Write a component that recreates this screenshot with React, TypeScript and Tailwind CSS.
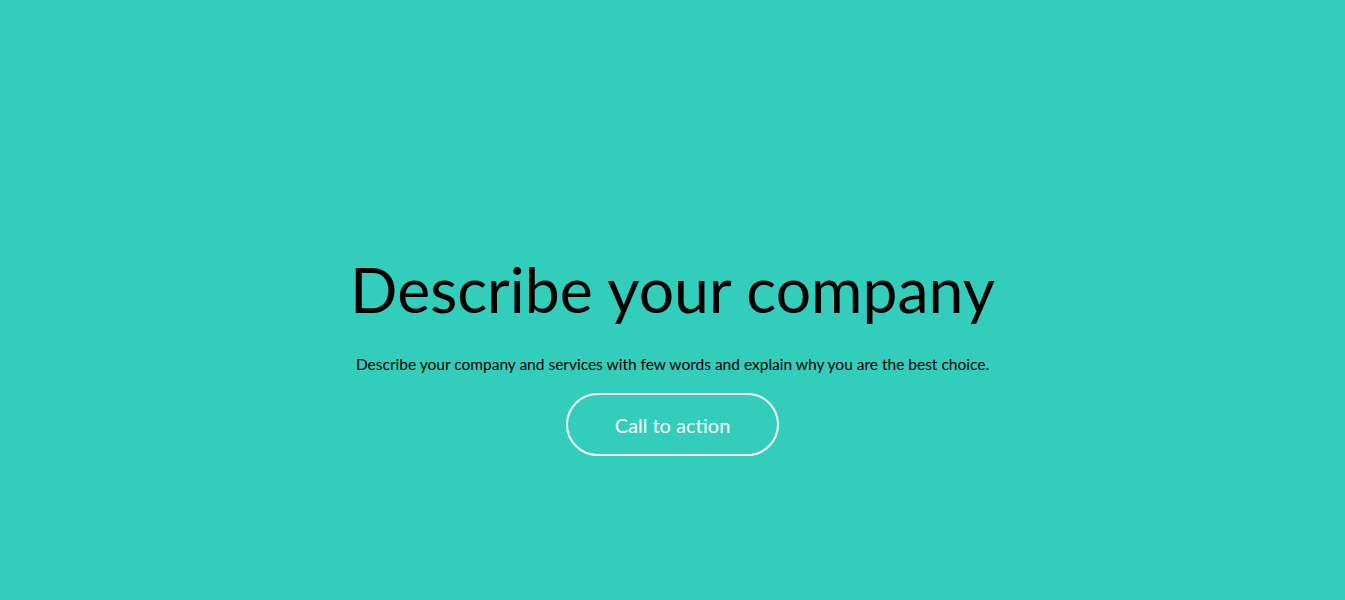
export default function App() {
  return (
    <main
      className="flex min-h-[600px] w-full flex-col items-center bg-[#33cdbb] pt-[251px]"
      style={{ fontFamily: "Lato, 'Liberation Sans', sans-serif" }}
    >
      <h1 className="text-[62.5px] font-normal leading-[76px] text-black">Describe your company</h1>
      <p className="mt-[25px] text-[15.5px] leading-[24px] text-black">
        Describe your company and services with few words and explain why you are the best choice.
      </p>
      <a
        href="#"
        className="mt-[17px] flex h-[63px] w-[213px] items-center justify-center rounded-full border-2 border-white text-[20px] text-white"
      >
        Call to action
      </a>
    </main>
  );
}
